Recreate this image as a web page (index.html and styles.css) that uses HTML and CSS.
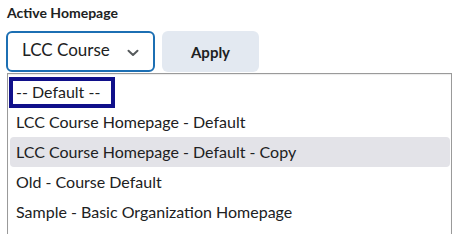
FILE: index.html
```html
<!DOCTYPE html>
<html lang="en">
<head>
<meta charset="utf-8">
<title>Active Homepage</title>
<link rel="stylesheet" href="styles.css">
</head>
<body>
<div class="page">
  <label class="label">Active Homepage</label>
  <div class="controls">
    <div class="select">
      <span class="select-text">LCC Course</span>
      <svg class="chev" width="12" height="8" viewBox="0 0 12 8"><path d="M1.5 1.8 L6 6 L10.5 1.8" fill="none" stroke="#565a5c" stroke-width="2" stroke-linecap="round" stroke-linejoin="round"/></svg>
    </div>
    <button class="btn">Apply</button>
  </div>
  <ul class="list">
    <li class="opt first"><span class="focus">-- Default --</span></li>
    <li class="opt">LCC Course Homepage - Default</li>
    <li class="opt hover">LCC Course Homepage - Default - Copy</li>
    <li class="opt">Old - Course Default</li>
    <li class="opt">Sample - Basic Organization Homepage</li>
  </ul>
</div>
</body>
</html>
```

FILE: styles.css
```css
html, body {
  margin: 0;
  padding: 0;
  background: #ffffff;
}
body {
  font-family: Lato, "Noto Sans", sans-serif;
  color: #202122;
  overflow: hidden;
}
.page {
  padding: 3px 0 0 7px;
  width: 445px;
}
.label {
  display: block;
  font-weight: 700;
  font-size: 14px;
  line-height: 20px;
  color: #202122;
}
.controls {
  display: flex;
  gap: 7px;
  margin-top: 8px;
  margin-left: -1px;
}
.select {
  box-sizing: border-box;
  width: 149px;
  height: 41px;
  border: 2px solid #1c6fb3;
  border-radius: 6px;
  display: flex;
  align-items: flex-start;
  justify-content: space-between;
  padding: 7px 14px 0 14px;
}
.select-text {
  font-size: 17px;
  line-height: 19px;
  color: #202122;
}
.chev {
  margin-top: 9px;
}
.btn {
  box-sizing: border-box;
  width: 97px;
  height: 41px;
  border: none;
  border-radius: 6px;
  background: #e3e9f1;
  font-family: Lato, "Noto Sans", sans-serif;
  font-weight: 700;
  font-size: 15px;
  color: #202122;
  padding: 0;
}
.list {
  list-style: none;
  margin: 1px 0 0 0;
  padding: 0 1px 0 2px;
  border-top: 1px solid #9a9a9a;
  border-left: 1px solid #9a9a9a;
  border-right: 1px solid #9a9a9a;
  box-shadow: inset 0 1px 1px rgba(0,0,0,0.08);
  height: 160px;
}
.opt {
  font-size: 16px;
  line-height: 30px;
  height: 30px;
  padding-left: 6px;
  color: #202122;
  border-radius: 4px;
  white-space: nowrap;
}
.opt.first {
  padding-left: 0;
  margin-left: -1px;
  margin-top: 3px;
}
.focus {
  display: inline-block;
  box-sizing: border-box;
  width: 106px;
  height: 31px;
  border: 4px solid #10108a;
  padding-left: 3px;
  line-height: 22px;
}
.opt.hover {
  background: #e3e3e8;
}
```
